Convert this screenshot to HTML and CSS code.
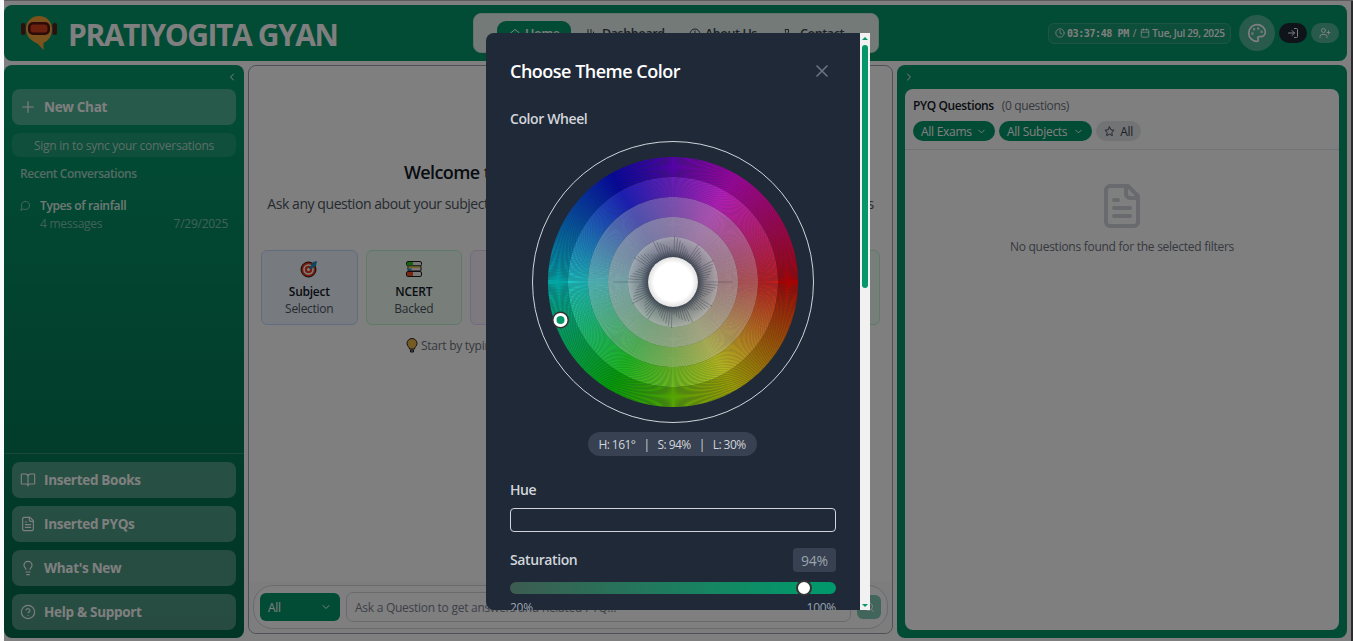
FILE: index.html
```html
<!DOCTYPE html>
<html lang="en">
<head>
<meta charset="utf-8">
<title>Pratiyogita Gyan</title>
<link rel="stylesheet" href="styles.css">
</head>
<body>
<svg class="defs" width="0" height="0">
  <symbol id="doc" viewBox="0 0 24 24"><path d="M15 2H6a2 2 0 0 0-2 2v16a2 2 0 0 0 2 2h12a2 2 0 0 0 2-2V7Z"/><path d="M14 2v4a2 2 0 0 0 2 2h4M10 9H8M16 13H8M16 17H8"/></symbol>
  <symbol id="down" viewBox="0 0 24 24"><path d="m6 9 6 6 6-6"/></symbol>
</svg>
<div class="app">
  <header class="header">
    <div class="brand">
      <svg class="logo" viewBox="0 0 36 34"><rect x="0" y="7" width="4.500" height="12" rx="2" fill="#5a2018"/><rect x="31.500" y="7" width="4.500" height="12" rx="2" fill="#5a2018"/><path d="M18 0C10 0 5 6 5 13c0 8 6 12 12 15l5.500 6v-7c6-3 8.500-8 8.500-14C31 6 26 0 18 0Z" fill="#f9a63a"/><rect x="7" y="6" width="22" height="13" rx="5" fill="#5a1710"/><rect x="9.500" y="8.500" width="17" height="8" rx="3" fill="#d8401c"/></svg>
      <span class="brand-name">PRATIYOGITA GYAN</span>
    </div>
    <nav class="nav">
      <a class="nav-item active"><svg class="i" viewBox="0 0 24 24"><path d="m3 10 9-7 9 7v9a2 2 0 0 1-2 2H5a2 2 0 0 1-2-2Z"/><path d="M9 21v-8h6v8"/></svg><span>Home</span></a>
      <a class="nav-item dash"><svg class="i" viewBox="0 0 24 24"><path d="M4 3v18M10 3v18M15 8v13M20 13v8"/></svg><span>Dashboard</span></a>
      <a class="nav-item about"><svg class="i" viewBox="0 0 24 24"><circle cx="12" cy="12" r="10"/><path d="M12 6v6M12 16v1"/></svg><span>About Us</span></a>
      <a class="nav-item contact"><svg class="i" viewBox="0 0 24 24"><path d="M3 3h6v6l-3 2c1 3 4 6 7 7l2-3 6 2v4H17C9 21 3 14 3 7Z"/></svg><span>Contact</span></a>
    </nav>
    <div class="tools">
      <div class="clock">
        <svg class="i" viewBox="0 0 24 24"><circle cx="12" cy="12" r="10"/><path d="M12 6v6l4 2"/></svg><span class="time">03:37:48 PM</span><span class="slash">/</span><svg class="i" viewBox="0 0 24 24"><path d="M8 2v4M16 2v4M3 10h18"/><rect x="3" y="4" width="18" height="18" rx="2"/></svg><span class="date">Tue, Jul 29, 2025</span>
      </div>
      <div class="palette"><svg class="i" viewBox="0 0 24 24"><circle cx="13.500" cy="6.500" r=".5"/><circle cx="17.500" cy="10.500" r=".5"/><circle cx="8.500" cy="7.500" r=".5"/><circle cx="6.500" cy="12.500" r=".5"/><path d="M12 2C6.500 2 2 6.500 2 12s4.500 10 10 10c.926 0 1.648-.746 1.648-1.688 0-.437-.18-.835-.437-1.125-.29-.289-.438-.652-.438-1.125a1.640 1.640 0 0 1 1.668-1.668h1.996c3.051 0 5.555-2.503 5.555-5.554C21.965 6.012 17.461 2 12 2z"/></svg></div>
      <div class="pill dark"><svg class="i" viewBox="0 0 24 24"><path d="M15 3h4a2 2 0 0 1 2 2v14a2 2 0 0 1-2 2h-4M10 17l5-5-5-5M15 12H3"/></svg></div>
      <div class="pill"><svg class="i" viewBox="0 0 24 24"><path d="M16 21v-2a4 4 0 0 0-4-4H6a4 4 0 0 0-4 4v2"/><circle cx="9" cy="7" r="4"/><path d="M19 8v6M22 11h-6"/></svg></div>
    </div>
  </header>
  <main class="columns">
    <aside class="sidebar">
      <div class="collapse"><svg class="i" viewBox="0 0 24 24"><path d="m15 18-6-6 6-6"/></svg></div>
      <button class="side-btn new"><svg class="i" viewBox="0 0 24 24"><path d="M4 12h16M12 4v16"/></svg><span>New Chat</span></button>
      <div class="sync"><span>Sign in to sync your conversations</span></div>
      <div class="recent"><span>Recent Conversations</span></div>
      <div class="chat">
        <svg class="i" viewBox="0 0 24 24"><path d="M7.900 20A9 9 0 1 0 4 16.100L2 22Z"/></svg>
        <div class="chat-body"><div class="chat-title"><span>Types of rainfall</span></div><div class="chat-meta"><span>4 messages</span><span class="day">7/29/2025</span></div></div>
      </div>
      <div class="side-foot">
        <button class="side-btn"><svg class="i" viewBox="0 0 24 24"><path d="M12 7v14M3 18a1 1 0 0 1-1-1V4a1 1 0 0 1 1-1h5a4 4 0 0 1 4 4 4 4 0 0 1 4-4h5a1 1 0 0 1 1 1v13a1 1 0 0 1-1 1h-6a3 3 0 0 0-3 3 3 3 0 0 0-3-3z"/></svg><span>Inserted Books</span></button>
        <button class="side-btn"><svg class="i"><use href="#doc"/></svg><span>Inserted PYQs</span></button>
        <button class="side-btn"><svg class="i" viewBox="0 0 24 24"><path d="M15 14c.2-1 .7-1.700 1.500-2.500 1-.9 1.500-2.200 1.500-3.500A6 6 0 0 0 6 8c0 1 .2 2.200 1.500 3.500.7.700 1.300 1.500 1.500 2.500M9 18h6M10 22h4"/></svg><span>What's New</span></button>
        <button class="side-btn"><svg class="i" viewBox="0 0 24 24"><circle cx="12" cy="12" r="10"/><path d="M9.090 9a3 3 0 0 1 5.830 1c0 2-3 3-3 3M12 17h.01"/></svg><span>Help &amp; Support</span></button>
      </div>
    </aside>
    <section class="center">
      <div class="welcome">
        <h2>Welcome to Pratiyogita Gyan AI Assistant</h2>
        <div class="intro"><span>Ask any question about your subjects and get answers backed by NCERT books and all related PYQs</span></div>
        <div class="cards">
          <div class="card blue"><svg class="emoji" viewBox="0 0 18 18"><circle cx="8.500" cy="9.500" r="7.500" fill="#e83b1b" stroke="#301010"/><circle cx="8.500" cy="9.500" r="4.500" fill="none" stroke="#fff" stroke-width="1.500"/><circle cx="8.500" cy="9.500" r="1.500" fill="#fff"/><path d="m9 9 4-7 4-1-1 5-5 3" fill="#1d8ebb"/></svg><b>Subject</b><span>Selection</span></div>
          <div class="card green"><svg class="emoji" viewBox="0 0 18 18"><rect x="1.500" y="1.500" width="15" height="4.500" rx="1.500" fill="#eee" stroke="#201a1a"/><rect x="3" y="6" width="13" height="5" rx="1" fill="#eee" stroke="#201a1a"/><rect x="1.500" y="11.500" width="15" height="5" rx="1.500" fill="#eee" stroke="#201a1a"/><path d="M2 2h6v3.500H2z" fill="#2bc21c"/><path d="M3.500 6.500h11V8h-11z" fill="#e9c63b"/><path d="M3.500 8.500h3v2h-3z" fill="#2583d1"/><path d="M2 12h6v4H2z" fill="#f05021"/></svg><b>NCERT</b><span>Backed</span></div>
          <div class="card purple"><b>PYQ</b><span>Related</span></div>
          <div class="card amber"></div><div class="card rose"></div>
          <div class="card mint"></div>
        </div>
        <div class="hint"><svg class="bulb" viewBox="0 0 12 16"><path d="M3.500 11C3.500 9 1 8 1 5.500a5 5 0 0 1 10 0C11 8 8.500 9 8.500 11Z" fill="#eab84c" stroke="#2b2113"/><path d="M4.500 12h3v2h-3z" fill="#aaa" stroke="#222"/></svg><span>Start by typing your question below</span></div>
      </div>
      <div class="composer">
        <div class="ask">
          <div class="select"><span>All</span><svg class="i"><use href="#down"/></svg></div>
          <div class="input"><span>Ask a Question to get answers and Related PYQ...</span></div>
          <div class="send"><svg class="i" viewBox="0 0 24 24"><circle cx="11" cy="11" r="8"/><path d="m21 21-4.300-4.300"/></svg></div>
        </div>
      </div>
    </section>
    <aside class="right">
      <div class="collapse"><svg class="i" viewBox="0 0 24 24"><path d="m9 18 6-6-6-6"/></svg></div>
      <div class="panel">
        <div class="panel-head">
          <div class="panel-title"><b>PYQ Questions</b><span>(0 questions)</span></div>
          <div class="filters">
            <div class="chip exams"><span>All Exams</span><svg class="i"><use href="#down"/></svg></div>
            <div class="chip subjects"><span>All Subjects</span><svg class="i"><use href="#down"/></svg></div>
            <div class="chip all"><svg class="i" viewBox="0 0 24 24"><path d="m12 2 3.100 6.300 6.900 1-5 4.900 1.200 6.800-6.200-3.200L5.800 21 7 14.200l-5-4.900 6.900-1Z"/></svg><span>All</span></div>
          </div>
        </div>
        <div class="empty"><svg class="i"><use href="#doc"/></svg><span>No questions found for the selected filters</span></div>
      </div>
    </aside>
  </main>
</div>
<div class="overlay"></div>
<div class="edge"></div>
<div class="modal">
  <div class="modal-body">
    <div class="modal-head"><h3>Choose Theme Color</h3><svg class="i" viewBox="0 0 24 24"><path d="M18 6 6 18M6 6l12 12"/></svg></div>
    <div class="label wheel-label"><span>Color Wheel</span></div>
    <svg class="wheel" width="282" height="282" viewBox="0 0 282 282">
      <defs>
        <radialGradient id="hub"><stop offset=".76" stop-color="#fff"/><stop offset="1" stop-color="#e0e0e0"/></radialGradient>
        <radialGradient id="shade" gradientUnits="userSpaceOnUse" cx="141" cy="141" r="45"><stop offset=".55" stop-color="#1f2937" stop-opacity=".7"/><stop offset=".72" stop-color="#1f2937" stop-opacity=".25"/><stop offset="1" stop-color="#1f2937" stop-opacity="0"/></radialGradient>
      </defs>
      <circle cx="141" cy="141" r="140.500" fill="none" stroke="#d1d5db"/>
      <g id="segments"></g>
      <circle cx="141" cy="141" r="45" fill="url(#shade)"/>
      <g id="spokes" stroke="#1f2937"></g>
      <circle cx="141" cy="141" r="25" fill="url(#hub)"/>
      <circle cx="28.500" cy="179" r="8.500" fill="#333"/><circle cx="28.500" cy="179" r="7" fill="#fff"/><circle cx="28.500" cy="179" r="4" fill="#05966a"/>
    </svg>
    <div class="hsl"><span>H: 161°</span><span>|</span><span>S: 94%</span><span>|</span><span>L: 30%</span></div>
    <div class="label hue-label"><span>Hue</span></div>
    <div class="hue"></div>
    <div class="sat"><div class="label"><span>Saturation</span></div><div class="value"><span>94%</span></div></div>
    <div class="track"><div class="thumb"></div></div>
    <div class="range"><span>20%</span><span>100%</span></div>
  </div>
  <div class="scroll"><i class="up"></i><div class="bar"></div><i class="dn"></i></div>
</div>
<script src="wheel.js"></script>
</body>
</html>
```
FILE: styles.css
```css
*{box-sizing:border-box}
body{margin:0;width:1353px;height:641px;overflow:hidden;background:#f8fafc;font-family:"Segoe UI","Open Sans",sans-serif;font-size:12px;letter-spacing:-.27px;color:#111827;position:relative}
h2,h3{margin:0}
button{border:0;font:inherit;letter-spacing:inherit;text-align:left}
span,b,h2,h3{white-space:nowrap}
.defs{position:absolute}
.i{width:12px;height:12px;fill:none;stroke:currentColor;stroke-width:2;stroke-linecap:round;stroke-linejoin:round;flex:none;display:block}
.app{height:641px;margin-left:4px;padding:5px 6px 0 0;background:#fff;display:flex;flex-direction:column;gap:4px}
.header{height:56px;background:#059669;border-radius:8px;display:flex;flex:none;color:#fff}
.brand{display:flex;width:469px;padding-left:17px;gap:11px;align-items:flex-start;flex:none}
.logo{width:36px;height:34px;margin-top:11px}
.brand-name{font-size:30px;font-weight:700;line-height:42px;letter-spacing:-1.420px;margin-top:9px}
.nav{width:406px;height:40px;margin-top:8px;border-radius:8px;background:#e6f4ee;border:1px solid #c6e5d9;display:flex;padding:7px 23px;color:#374151;flex:none;font-size:12.500px;font-weight:600}
.nav-item{height:28px;display:flex;align-items:center;gap:4px;padding:0 0 3px 12px;letter-spacing:-.4px}
.nav-item.active{background:#059669;color:#fff;border-radius:9px;width:74px}
.dash{margin-left:3px;width:103px}.about{width:95px}
.tools{margin-left:auto;display:flex;align-items:center;gap:4px;padding-right:8px}
.clock{height:21px;width:183px;border:1px solid #3aab87;background:#1a9d74;border-radius:6px;display:flex;align-items:center;padding-left:6px;font-size:10px;gap:2px;margin-right:4px}
.clock .i{width:10px;height:10px}
.slash{margin:0 2px}
.time{font:700 10px "DejaVu Sans Mono",monospace;letter-spacing:-.4px}
.date{font-weight:600;letter-spacing:-.3px}
.palette{width:36px;height:36px;border-radius:50%;background:#50b696;display:grid;place-items:center}
.palette .i{width:20px;height:20px}
.pill{width:28px;height:20px;border-radius:10px;background:#50b696;display:grid;place-items:center}
.pill.dark{background:#1f2937}
.columns{height:573px;display:flex;gap:4px}
.sidebar{width:240px;border-radius:8px;background:linear-gradient(#059669 10%,#047050 85%,#036a4a);display:flex;flex-direction:column;color:#fff;flex:none}
.sidebar .collapse{height:24px;padding:6px 6px 0 0;display:flex;justify-content:flex-end}
.side-btn{display:flex;align-items:center;gap:8px;height:36px;margin:0 8px;padding:0 8px;background:rgba(255,255,255,.3);border-radius:8px;color:#fff;font-size:13.500px;font-weight:700;letter-spacing:-.3px;flex:none}
.side-btn .i{width:16px;height:16px;stroke-width:1.700}
.sync{height:24px;margin:8px 8px 0;border-radius:8px;background:rgba(255,255,255,.1);text-align:center;line-height:25px;color:#b9ddd0}
.recent{margin:8px 16px 0;line-height:18px;color:#a9d5c6;font-weight:600;letter-spacing:-.45px}
.chat{display:flex;margin:14px 16px 0;gap:9px;color:#a0cfbf}
.chat .i{width:11px;height:11px;margin-top:3px}
.chat-body{flex:1}
.chat-title{line-height:18px;color:#e0f2ec;font-weight:600;letter-spacing:-.37px}
.chat-meta{display:flex;justify-content:space-between;line-height:18px;color:#82c2ad}
.side-foot{margin-top:auto;border-top:1px solid #358f74;padding:8px 0;display:flex;flex-direction:column;gap:8px}
.center{width:645px;height:569px;border:1px solid #9ca3af;border-radius:8px;background:#fff;display:flex;flex-direction:column;flex:none}
.welcome{height:515px;padding:92px 12px 0;display:flex;flex-direction:column;flex:none}
h2{text-align:center;font-size:18px;line-height:28px;font-weight:600;letter-spacing:-.6px}
.intro{display:flex;justify-content:center;font-size:14px;letter-spacing:-.44px;line-height:20px;color:#4b5563;margin-top:8px}
.cards{display:grid;grid-template-columns:repeat(6,1fr);gap:8px;margin-top:36px}
.card{height:75px;border:1px solid;border-radius:6px;display:flex;flex-direction:column;align-items:center;padding-top:9px;line-height:17px;color:#4b5563}
.card b{font-weight:600;color:#111827;margin-top:5px}
.emoji{width:18px;height:18px}
.blue{background:#eff6ff;border-color:#bfdbfe}.green,.mint{background:#f0fdf4;border-color:#bbf7d0}.purple{background:#faf5ff;border-color:#e9d5ff}.amber{background:#fffbeb;border-color:#fde68a}.rose{background:#fff1f2;border-color:#fecdd3}
.hint{display:flex;gap:3px;padding-left:145px;margin-top:12px;line-height:18px;color:#6b7280}
.bulb{width:12px;height:16px;margin-top:1px}
.composer{flex:1;background:#f8faf9;border-radius:0 0 8px 8px;padding:4px}
.ask{height:44px;border:1px solid #d1d5db;border-radius:20px;display:flex;align-items:center;gap:6px;padding:0 6px;background:#fff}
.select{width:80px;height:28px;border-radius:6px;background:#059669;color:#fff;display:flex;align-items:center;justify-content:space-between;padding:0 8px}
.input{flex:1;height:30px;border:1px solid #d1d5db;border-radius:7px;padding:0 8px;line-height:29px;color:#7b8290}
.send{width:24px;height:24px;border-radius:6px;background:#82cbb4;color:#fff;display:grid;place-items:center}
.right{width:450px;border-radius:8px;background:#059669;padding:0 8px 8px;display:flex;flex-direction:column;flex:none}
.right .collapse{height:24px;padding-top:6px;margin-left:-2px;color:#fff}
.panel{flex:1;background:#fff;border-radius:8px}
.panel-head{height:61px;border-bottom:1px solid #e5e7eb;padding:8px 8px 0}
.panel-title{display:flex;gap:8px;line-height:18px}
.panel-title b{font-weight:600;letter-spacing:-.38px}.panel-title span{color:#6b7280;letter-spacing:-.36px}
.filters{display:flex;gap:4px;margin-top:6px}
.chip{height:20px;border-radius:10px;background:#059669;color:#fff;padding:0 8px;display:flex;align-items:center;justify-content:space-between}
.exams{width:82px}.subjects{width:93px}.all{width:45px;background:#e5e7eb;color:#374151}
.filters .i{width:11px;height:11px}
.empty{padding-top:32px;display:flex;flex-direction:column;align-items:center;gap:8px;color:#6b7280;line-height:18px}
.empty .i{width:48px;height:48px;color:#d1d5db}
.overlay{position:absolute;left:4px;top:0;right:0;bottom:0;background:rgba(0,0,0,.5);border-top:1px solid #5c5c5c}
.edge{position:absolute;right:0;top:1px;width:2px;height:640px;background:#2b2b2f}
.modal{position:absolute;left:486px;top:33px;width:384px;height:577px;background:#1f2937;border-radius:8px 0 0 8px;overflow:hidden;display:flex;color:#d1d5db}
.modal-body{width:374px;height:577px;padding:24px;display:flex;flex-direction:column;flex:none}
.modal-head{display:flex;justify-content:space-between;align-items:center;height:28px;color:#6b7280}
.modal-head .i{width:20px;height:20px;margin-right:4px}
h3{font-size:18px;font-weight:600;color:#fff;line-height:28px;letter-spacing:-.5px}
.label{font-size:14px;line-height:20px;font-weight:600;height:20px;letter-spacing:-.4px}
.wheel-label{margin-top:24px}
.wheel{margin:12px 0 0 22px;flex:none}
.hsl{align-self:center;width:169px;height:24px;border-radius:12px;background:#374151;display:flex;justify-content:center;gap:8px;line-height:25px;margin:9px 2px 0 0;letter-spacing:-.55px;flex:none}
.hue-label{margin-top:24px}
.hue{height:24px;border:1px solid #d1d5db;border-radius:4px;margin-top:8px;flex:none}
.sat{display:flex;justify-content:space-between;align-items:center;margin-top:16px;height:24px;flex:none}
.value{width:43px;height:24px;border-radius:4px;background:#374151;color:#9ca3af;text-align:center;line-height:25px;font-size:14px}
.track{height:12px;border-radius:6px;background:linear-gradient(90deg,#3d5c51,#059669 88%,#00996b);margin-top:10px;position:relative;flex:none}
.thumb{position:absolute;left:286px;top:-2px;width:16px;height:16px;border-radius:50%;background:#fff;border:2px solid #333}
.range{display:flex;justify-content:space-between;line-height:16px;margin-top:6px;color:#9ca3af;flex:none}
.scroll{width:10px;background:#f1f1f1;display:flex;flex-direction:column;align-items:center;padding:4px 0 3px}
.up,.dn{width:0;height:0;border:3px solid transparent}
.up{border-top:0;border-bottom-color:#059669}.dn{border-bottom:0;border-top-color:#059669;margin-top:auto}
.bar{width:6px;height:243px;border-radius:3px;background:#059669;margin-top:5px}
```
FILE: wheel.js
```js
// Wedge grid: two paths per degree in each of five saturation rings.
const ns = "http://www.w3.org/2000/svg";
const group = document.getElementById("segments");
const spokes = document.getElementById("spokes");
const c = 141;
const step = 0.5;
const point = (r, a) => (c + r * Math.cos(a * Math.PI / 180)) + " " + (c + r * Math.sin(a * Math.PI / 180));
const rings = [[25, 25, 86], [45, 36, 71], [65, 55, 59], [85, 75, 45], [105, 95, 33]];
for (const [r, s, l] of rings) {
  for (let a = 0; a < 360; a += step) {
    const p = document.createElementNS(ns, "path");
    p.setAttribute("d", `M${point(r, a)}L${point(r + 20, a)}A${r + 20} ${r + 20} 0 0 1 ${point(r + 20, a + step)}L${point(r, a + step)}A${r} ${r} 0 0 0 ${point(r, a)}Z`);
    p.setAttribute("fill", `hsl(${a},${s}%,${l}%)`);
    group.append(p);
  }
}
// Fine dark spokes radiating from the hub, longest along the axes.
for (let a = 0; a < 360; a += 4) {
  const p = document.createElementNS(ns, "path");
  const reach = a % 90 === 0 ? 60 : 32 + (a * 7) % 15;
  p.setAttribute("d", `M${point(25, a)}L${point(reach, a)}`);
  p.setAttribute("stroke-width", a % 90 === 0 ? 1 : 0.7);
  p.setAttribute("stroke-opacity", a % 90 === 0 ? 0.3 : 0.45);
  spokes.append(p);
}
```
